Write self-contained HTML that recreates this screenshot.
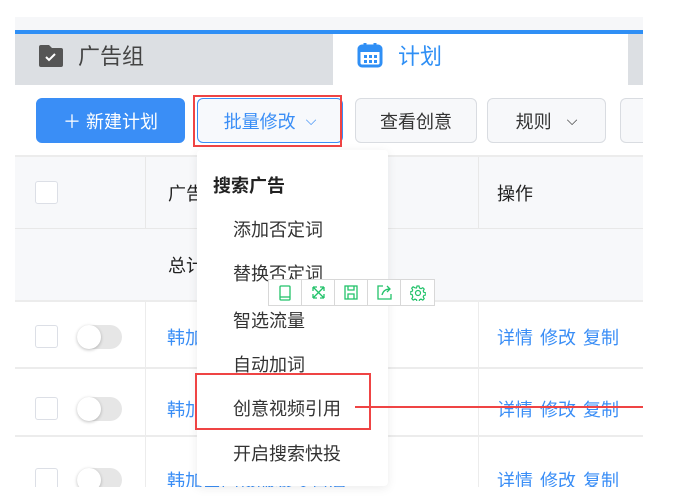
<html><head><style>
body{margin:0;width:689px;height:502px;background:#fff;position:relative;overflow:hidden;font-family:"Liberation Sans","Noto Sans CJK SC",sans-serif;}
div{box-sizing:border-box}
.a{position:absolute}
.btn{position:absolute;top:98px;height:45px;border:1px solid #d9dce1;border-radius:6px;background:#f7f8fa;font-size:18px;color:#333;display:flex;align-items:center;justify-content:center}
.cb{position:absolute;width:23px;height:23px;border:1px solid #dcdfe6;border-radius:3px;background:#fff}
.sw{position:absolute;width:45px;height:24px;border-radius:12px;background:#e6e6e6}
.sw:after{content:"";position:absolute;left:0;top:0;width:24px;height:24px;border-radius:50%;background:#fff;box-shadow:0 1px 3px rgba(0,0,0,.25)}
.lk{position:absolute;color:#3a8ef6;font-size:18px}
.mi{position:absolute;left:233px;font-size:18px;color:#333}
.tb{position:absolute;top:279px;height:27px;width:33px;border-right:1px solid #d8d8d8;display:flex;align-items:center;justify-content:center}
</style></head><body>
<div class="a" style="left:15px;top:17px;width:628px;height:14px;background:#f6f7f9"></div>
<div class="a" style="left:15px;top:30px;width:628px;height:4px;background:#2f8ff5"></div>
<div class="a" style="left:628px;top:34px;width:15px;height:51px;background:#dcdfe3"></div>
<div class="a" style="left:333px;top:34px;width:295px;height:51px;background:#fff"></div>
<div class="a" style="left:15px;top:34px;width:318px;height:51px;background:#dcdfe3"></div>
<svg class="a" style="left:37px;top:42px" width="28" height="28" viewBox="0 0 28 28"><path d="M2 5a2 2 0 0 1 2-2h8l3 3h9a2 2 0 0 1 2 2v15a2 2 0 0 1-2 2H4a2 2 0 0 1-2-2z" fill="#555"/><path d="M9 15l3 3 6-6" stroke="#fff" stroke-width="2" fill="none"/></svg>
<div class="a" style="left:78px;top:39px;font-size:22px;color:#444">广告组</div>
<svg class="a" style="left:357px;top:41px" width="26" height="28" viewBox="0 0 26 28"><rect x="2" y="5" width="22" height="20" rx="3" fill="none" stroke="#2f8ff5" stroke-width="3"/><rect x="2" y="5" width="22" height="6" fill="#2f8ff5"/><path d="M8 2v6M18 2v6" stroke="#2f8ff5" stroke-width="3"/><g fill="#2f8ff5"><rect x="7" y="14" width="3" height="3"/><rect x="12" y="14" width="3" height="3"/><rect x="17" y="14" width="3" height="3"/><rect x="7" y="19" width="3" height="3"/><rect x="12" y="19" width="3" height="3"/><rect x="17" y="19" width="3" height="3"/></g></svg>
<div class="a" style="left:398px;top:39px;font-size:22px;color:#2f8ff5">计划</div>
<div class="btn" style="left:36px;width:149px;background:#3a8ef6;border-color:#3a8ef6;color:#fff">＋ 新建计划</div>
<div class="btn" style="left:197px;width:146px;border-color:#3a8ef6;color:#3a8ef6;background:#f7f9fc">批量修改 &nbsp;<span style="font-size:14px">⌵</span></div>
<div class="a" style="left:193px;top:95px;width:149px;height:52px;border:2px solid #ef4444"></div>
<div class="btn" style="left:355px;width:122px">查看创意</div>
<div class="btn" style="left:487px;width:119px">规则 &nbsp;&nbsp;<span style="font-size:14px">⌵</span></div>
<div class="btn" style="left:620px;width:30px;border-right:none;border-radius:6px 0 0 6px"></div>
<div class="a" style="left:643px;top:0;width:46px;height:502px;background:#fff"></div>
<div class="a" style="left:15px;top:155px;width:628px;height:145px;background:#f7f8fa;border-top:2px solid #ececec"></div>
<div class="a" style="left:15px;top:228px;width:628px;height:1px;background:#e8e8e8"></div>
<div class="a" style="left:145px;top:157px;width:1px;height:71px;background:#e8e8e8"></div>
<div class="a" style="left:478px;top:157px;width:1px;height:71px;background:#e8e8e8"></div>
<div class="cb" style="left:35px;top:181px"></div>
<div class="a" style="left:168px;top:180px;font-size:18px;color:#222">广告</div>
<div class="a" style="left:497px;top:180px;font-size:18px;color:#222">操作</div>
<div class="a" style="left:168px;top:252px;font-size:18px;color:#222">总计</div>
<div class="a" style="left:15px;top:300px;width:628px;height:2px;background:#ececec"></div>
<div class="a" style="left:15px;top:367px;width:628px;height:2px;background:#ececec"></div>
<div class="a" style="left:15px;top:435px;width:628px;height:2px;background:#ececec"></div>
<div class="a" style="left:145px;top:300px;width:1px;height:200px;background:#ececec"></div>
<div class="a" style="left:478px;top:300px;width:1px;height:200px;background:#ececec"></div>
<div class="cb" style="left:35px;top:325px"></div><div class="sw" style="left:77px;top:325px"></div>
<div class="cb" style="left:35px;top:397px"></div><div class="sw" style="left:77px;top:397px"></div>
<div class="cb" style="left:35px;top:468px"></div><div class="sw" style="left:77px;top:468px"></div>
<div class="lk" style="left:167px;top:324px">韩加</div>
<div class="lk" style="left:167px;top:396px">韩加</div>
<div class="lk" style="left:167px;top:467px">韩加西门技服装专营店</div>
<div class="lk" style="left:497px;top:324px;word-spacing:2px">详情 修改 复制</div>
<div class="lk" style="left:497px;top:396px;word-spacing:2px">详情 修改 复制</div>
<div class="lk" style="left:497px;top:467px;word-spacing:2px">详情 修改 复制</div>
<div class="a" style="left:0;top:487px;width:689px;height:15px;background:#fff"></div>
<div class="a" style="left:197px;top:150px;width:191px;height:336px;background:#fff;border-radius:4px;box-shadow:0 2px 10px rgba(0,0,0,.08)"></div>
<div class="a" style="left:213px;top:172px;font-size:18px;color:#222;font-weight:bold">搜索广告</div>
<div class="mi" style="top:216px">添加否定词</div>
<div class="mi" style="top:260px">替换否定词</div>
<div class="mi" style="top:307px">智选流量</div>
<div class="mi" style="top:351px">自动加词</div>
<div class="mi" style="top:395px">创意视频引用</div>
<div class="mi" style="top:440px">开启搜索快投</div>
<div class="a" style="left:195px;top:373px;width:176px;height:57px;border:2px solid #ef4444"></div>
<div class="a" style="left:355px;top:406px;width:288px;height:2px;background:#ef4444"></div>
<div class="a" style="left:268px;top:279px;width:167px;height:27px;background:#fff;border:1px solid #d8d8d8"></div>
<div class="tb" style="left:269px"><svg width="14" height="16" viewBox="0 0 14 16" fill="none" stroke="#22c26a" stroke-width="1.3"><rect x="2" y="1" width="10" height="14" rx="1"/><path d="M2 12h10"/></svg></div>
<div class="tb" style="left:302px"><svg width="15" height="15" viewBox="0 0 15 15" fill="none" stroke="#22c26a" stroke-width="1.3"><path d="M2 2l11 11M13 2L2 13M2 2h4M2 2v4M13 2h-4M13 2v4M2 13h4M2 13v-4M13 13h-4M13 13v-4"/></svg></div>
<div class="tb" style="left:335px"><svg width="14" height="15" viewBox="0 0 14 15" fill="none" stroke="#22c26a" stroke-width="1.3"><rect x="1" y="1" width="12" height="13"/><path d="M4 1v4h6V1M4 14v-5h6v5"/></svg></div>
<div class="tb" style="left:368px"><svg width="15" height="15" viewBox="0 0 15 15" fill="none" stroke="#22c26a" stroke-width="1.3"><path d="M6 1H1v13h13V9M5 10c1-4 4-6 8-6M10 1l3 3-3 3"/></svg></div>
<div class="tb" style="left:401px;border-right:none"><svg width="16" height="16" viewBox="0 0 16 16" fill="none" stroke="#22c26a" stroke-width="1.2"><circle cx="8" cy="8" r="2.5"/><path d="M7 1h2l.5 2 1.5.7 1.8-1 1.4 1.4-1 1.8.7 1.5 2 .5v2l-2 .5-.7 1.5 1 1.8-1.4 1.4-1.8-1-1.5.7-.5 2H7l-.5-2-1.5-.7-1.8 1-1.4-1.4 1-1.8L2.1 9.5 0 9V7l2-.5.7-1.5-1-1.8 1.4-1.4 1.8 1L6.5 3z"/></svg></div>
</body></html>
